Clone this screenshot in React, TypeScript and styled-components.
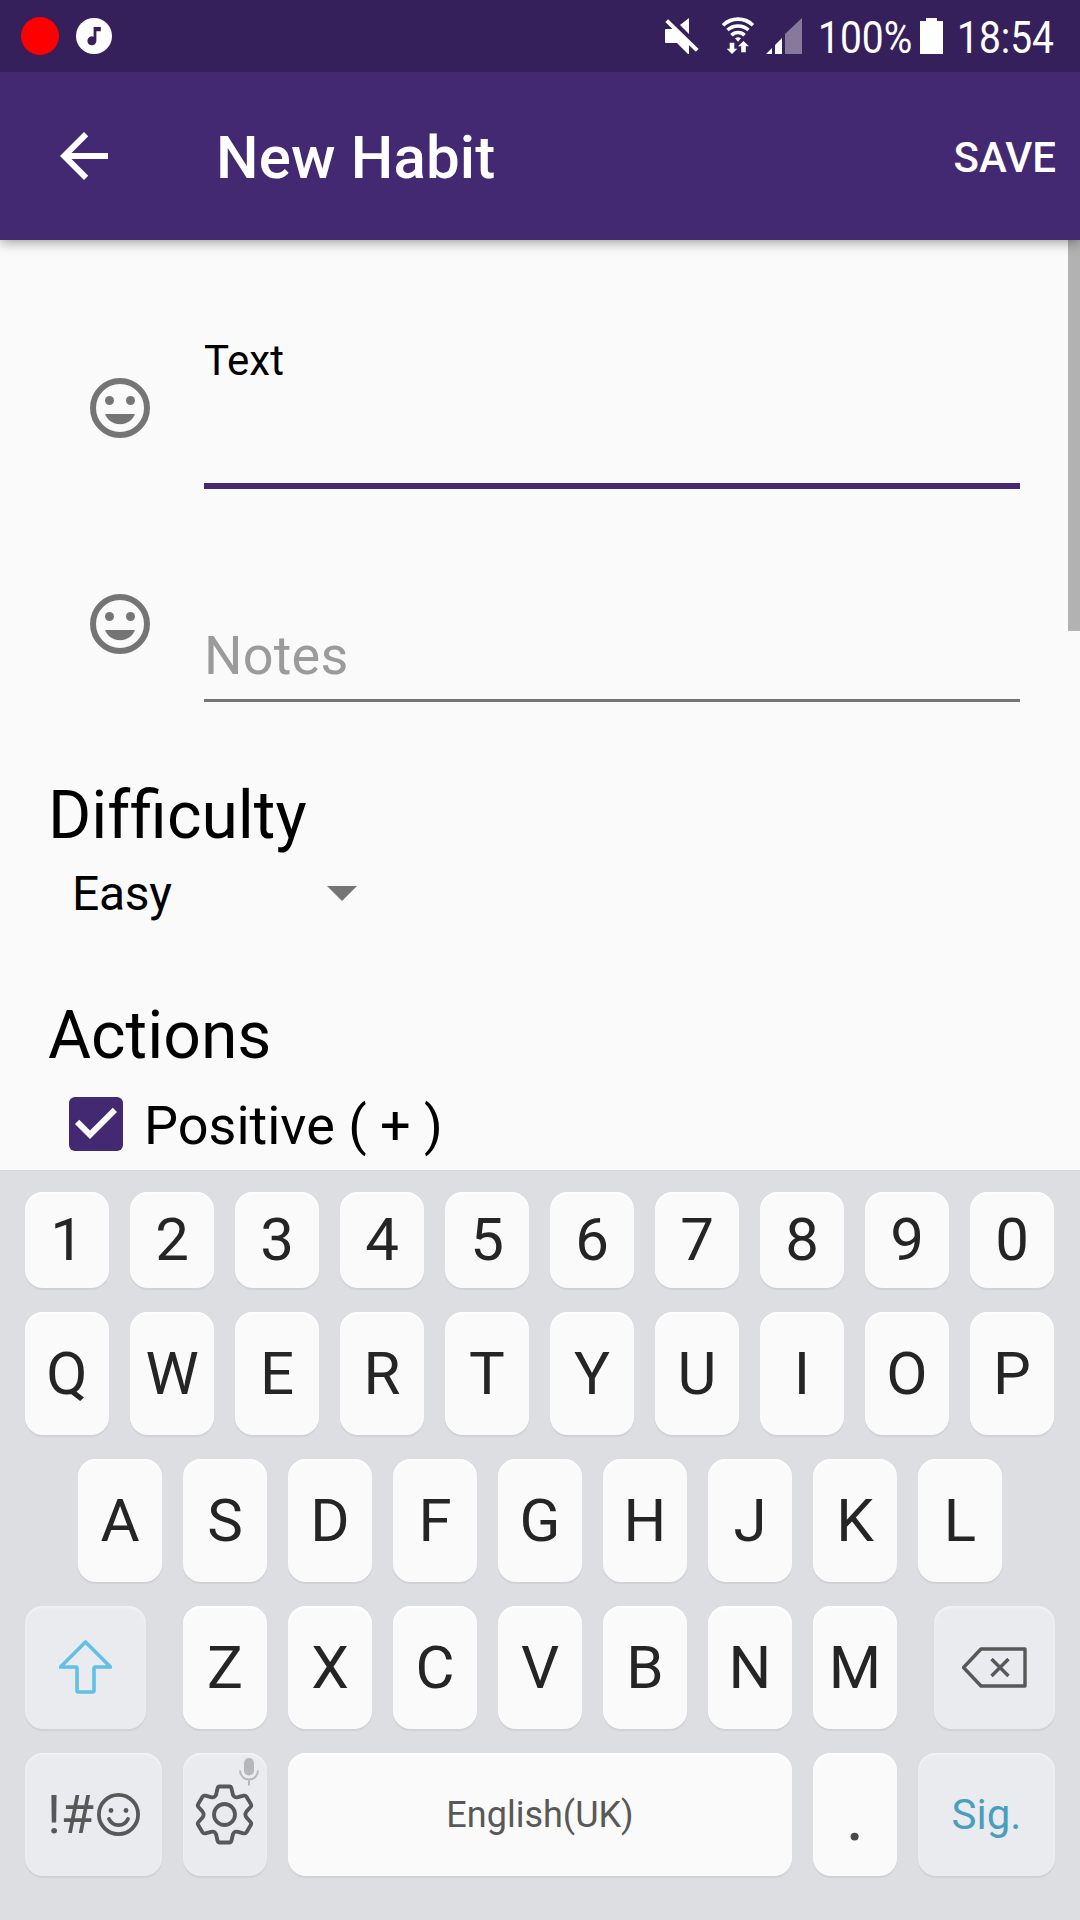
import React from 'react';
import styled, { createGlobalStyle } from 'styled-components';

const GlobalStyle = createGlobalStyle`
  * { box-sizing: border-box; }
  body { margin: 0; background: #fafafa; font-family: Roboto, "Noto Sans", sans-serif; }
  button { border: 0; padding: 0; margin: 0; background: none; font: inherit; color: inherit; }
`;

const Screen = styled.div`
  width: 1080px;
  height: 1920px;
  display: flex;
  flex-direction: column;
  overflow: hidden;
  background: #fafafa;
  color: #000;
`;

const StatusBar = styled.header`
  height: 72px;
  flex: none;
  display: flex;
  align-items: center;
  justify-content: space-between;
  padding: 0 0 0 21px;
  background: #36205b;
  color: #fff;
  z-index: 2;
`;

const StatusGroup = styled.div`
  display: flex;
  align-items: center;
  height: 72px;
`;

const RecordDot = styled.span`
  width: 38px;
  height: 38px;
  border-radius: 50%;
  background: #f00;
  margin-right: 17px;
`;

const Glyph = styled.svg<{ $gap?: number }>`
  display: block;
  flex: none;
  margin-left: ${(p) => p.$gap ?? 0}px;
`;

const StatusText = styled.span<{ $width: number; $gap: number }>`
  width: ${(p) => p.$width}px;
  margin-left: ${(p) => p.$gap}px;
  font-size: 45px;
  line-height: 72px;
  padding-top: 4px;
  white-space: nowrap;
  transform: scaleX(0.865);
  transform-origin: left center;
`;

const AppBar = styled.nav`
  height: 168px;
  flex: none;
  display: flex;
  align-items: center;
  padding: 0 24px 0 48px;
  background: #432872;
  color: #fff;
  z-index: 1;
  box-shadow: 0 2px 12px rgba(0, 0, 0, 0.4);
`;

const IconButton = styled.button`
  display: flex;
`;

const Title = styled.h1`
  margin: 0 0 0 96px;
  padding-top: 4px;
  flex: 1;
  font-size: 60px;
  font-weight: 500;
  line-height: 70px;
  letter-spacing: 0.15px;
`;

const SaveButton = styled.button`
  && {
    font-size: 42px;
    font-weight: 500;
    line-height: 50px;
    padding-top: 4px;
  }
`;

const Content = styled.main`
  height: 930px;
  flex: none;
  display: flex;
  justify-content: space-between;
  overflow: hidden;
`;

const Form = styled.form`
  width: 1020px;
  display: flex;
  flex-direction: column;
`;

const ScrollThumb = styled.div`
  width: 12px;
  height: 391px;
  background: #b2b2b2;
`;

const Field = styled.div<{ $height: number; $iconTop: number }>`
  height: ${(p) => p.$height}px;
  flex: none;
  display: flex;
  align-items: flex-start;
  padding-left: 84px;

  > button { margin-top: ${(p) => p.$iconTop}px; }
`;

const FieldBody = styled.label<{ $line: string; $thick: number; $muted?: boolean }>`
  width: 816px;
  height: 100%;
  margin-left: 48px;
  display: flex;
  flex-direction: column;
  border-bottom: ${(p) => p.$thick}px solid ${(p) => p.$line};
  color: ${(p) => (p.$muted ? '#9b9b9b' : '#000')};
`;

const FloatingLabel = styled.span`
  margin-top: 96px;
  font-size: 42px;
  line-height: 50px;
`;

const Hint = styled.span`
  margin-top: 135px;
  font-size: 54px;
  line-height: 64px;
  letter-spacing: 0.2px;
`;

const SectionTitle = styled.h2<{ $top: number }>`
  margin: ${(p) => p.$top}px 0 0 48px;
  font-size: 66px;
  font-weight: 400;
  line-height: 78px;
`;

const Syllables = styled.span`
  display: inline-block;
`;

const Select = styled.div`
  margin: 2px 0 0 72px;
  width: 285px;
  height: 72px;
  flex: none;
  display: flex;
  align-items: center;
  justify-content: space-between;
  font-size: 48px;
  line-height: 56px;
`;

const SelectValue = styled.span`
  padding-top: 2px;
  letter-spacing: -0.3px;
`;

const CheckRow = styled.label`
  display: flex;
  align-items: center;
  height: 72px;
  flex: none;
  margin: 13px 0 0 60px;
  font-size: 54px;
  line-height: 64px;
`;

const CheckLabel = styled.span`
  margin-left: 12px;
  padding-top: 4px;
`;

const Keyboard = styled.section`
  flex: 1;
  display: flex;
  flex-direction: column;
  gap: 24px;
  padding: 21px 25px 0;
  background: #dddee2;
  border-top: 1px solid #d5d6da;
`;

const KeyRow = styled.div<{ $height: number; $spread?: boolean; $indent?: number }>`
  height: ${(p) => p.$height}px;
  display: flex;
  gap: ${(p) => (p.$spread ? 37 : 21)}px;
  padding-left: ${(p) => p.$indent ?? 0}px;
`;

const KeyGroup = styled.div`
  display: flex;
  gap: 21px;
`;

const Key = styled.button<{ $width?: number; $soft?: boolean }>`
  && {
    width: ${(p) => p.$width ?? 84}px;
    height: 100%;
    flex: none;
    display: flex;
    align-items: center;
    justify-content: center;
    border-radius: 18px;
    background: ${(p) => (p.$soft ? '#e9ebef' : '#fafafa')};
    box-shadow: 0 2px 1px #d0d1d5, inset 0 2px 2px ${(p) => (p.$soft ? '#f2f3f5' : '#fff')};
    color: #252525;
    font-size: 60px;
    line-height: 70px;
    position: relative;
  }
`;

const KeyCaption = styled.span<{ $size: number; $color: string; $drop?: number }>`
  font-size: ${(p) => p.$size}px;
  color: ${(p) => p.$color};
  padding-top: ${(p) => p.$drop ?? 0}px;
`;

const MicBadge = styled.svg`
  position: absolute;
  top: 4px;
  right: 8px;
`;

const Mood = () => (
  <IconButton type="button">
    <Glyph width="72" height="72" viewBox="0 0 24 24" fill="#757575">
      <circle cx="12" cy="12" r="9" fill="none" stroke="#757575" strokeWidth="2" />
      <circle cx="8.5" cy="9.5" r="1.5" />
      <circle cx="15.5" cy="9.5" r="1.5" />
      <path d="M12 17.4c2.3 0 4.22-1.36 5-3.4H7c.78 2.04 2.7 3.4 5 3.4z" />
    </Glyph>
  </IconButton>
);

const letters = (row: string) => row.split('').map((c) => <Key key={c} type="button">{c}</Key>);

export default function App() {
  return (
    <Screen>
      <GlobalStyle />
      <StatusBar>
        <StatusGroup>
          <RecordDot />
          <Glyph width="36" height="36" viewBox="0 0 36 36">
            <circle cx="18" cy="18" r="18" fill="#fff" />
            <path d="M17.6 9h7.2v4.2h-4.400v9.600a4.500 4.500 0 1 1-2.800-4.100z" fill="#36205b" />
          </Glyph>
        </StatusGroup>
        <StatusGroup>
          <Glyph width="34" height="36" viewBox="0 0 34 36" fill="#fff">
            <path d="M1 11h9.500L24 24.500V36h-1L12 25H1q-1 0-1-1V12q0-1 1-1zM15 7L24 0v16z" />
            <path d="M1.700 2.600L32.200 32.400" stroke="#fff" strokeWidth="4" />
          </Glyph>
          <Glyph $gap={23} width="32" height="38" viewBox="0 0 32 38" fill="none" stroke="#fff" strokeWidth="3.600">
            <path d="M1 8.200a21.500 21.500 0 0 1 30 0M5.500 13a15.800 15.800 0 0 1 21 0M9.500 18.200a9.100 9.100 0 0 1 13 0" />
            <path d="M13 21.200q3-2 6 0L16 24.700zM7.700 25.700h4.600v6h3L10 37l-5.300-5.300h3zM19.200 35.300h4.600v-6H27L21.500 24 16 29.300h3.200z" fill="#fff" stroke="none" />
          </Glyph>
          <Glyph $gap={12} width="36" height="36" viewBox="0 0 36 36" fill="#fff">
            <path d="M0 36l6-6v6zM9 27l7-7v16H9z" />
            <path d="M19 16L36 0v36H19z" opacity="0.4" />
          </Glyph>
          <StatusText $gap={16} $width={102}>100%</StatusText>
          <Glyph width="23" height="36" viewBox="0 0 23 36" fill="#fff">
            <path d="M6 0h11v3h6v33H0V3h6z" />
          </Glyph>
          <StatusText $gap={14} $width={123}>18:54</StatusText>
        </StatusGroup>
      </StatusBar>

      <AppBar>
        <IconButton type="button">
          <Glyph width="72" height="72" viewBox="0 0 24 24" fill="#fff">
            <path d="M20 11H7.830l5.590-5.590L12 4l-8 8 8 8 1.410-1.410L7.830 13H20v-2z" />
          </Glyph>
        </IconButton>
        <Title>New Habit</Title>
        <SaveButton type="button">SAVE</SaveButton>
      </AppBar>

      <Content>
        <Form>
          <Field $height={249} $iconTop={132}>
            <Mood />
            <FieldBody $line="#432872" $thick={6}>
              <FloatingLabel>Text</FloatingLabel>
            </FieldBody>
          </Field>
          <Field $height={213} $iconTop={99}>
            <Mood />
            <FieldBody $line="#757575" $thick={3} $muted>
              <Hint>Notes</Hint>
            </FieldBody>
          </Field>
          <SectionTitle $top={75}><Syllables>Dif</Syllables><Syllables>ficulty</Syllables></SectionTitle>
          <Select>
            <SelectValue>Easy</SelectValue>
            <Glyph width="30" height="15" viewBox="0 0 30 15" fill="#757575">
              <path d="M0 0h30L15 15z" />
            </Glyph>
          </Select>
          <SectionTitle $top={68}>Actions</SectionTitle>
          <CheckRow>
            <Glyph width="72" height="72" viewBox="0 0 24 24">
              <rect x="3" y="3" width="18" height="18" rx="2" fill="#432872" />
              <path d="M10 17l-5-5 1.410-1.410L10 14.170l7.590-7.590L19 8l-9 9z" fill="#fafafa" />
            </Glyph>
            <CheckLabel>Positive ( + )</CheckLabel>
          </CheckRow>
        </Form>
        <ScrollThumb />
      </Content>

      <Keyboard>
        <KeyRow $height={96}>{letters('1234567890')}</KeyRow>
        <KeyRow $height={123}>{letters('QWERTYUIOP')}</KeyRow>
        <KeyRow $height={123} $indent={53}>{letters('ASDFGHJKL')}</KeyRow>
        <KeyRow $height={123} $spread>
          <Key $soft $width={121} type="button">
            <Glyph width="53" height="55" viewBox="0.5 0.5 53 55" fill="none" stroke="#62c0e6" strokeWidth="3.600" strokeLinejoin="round">
              <path d="M27 2.500L52 27.500H37q-1.500 0-1.500 1.500V51q0 1.500-1.500 1.500H20q-1.500 0-1.500-1.500V29q0-1.500-1.500-1.500H2z" />
            </Glyph>
          </Key>
          <KeyGroup>{letters('ZXCVBNM')}</KeyGroup>
          <Key $soft $width={121} type="button">
            <Glyph width="65" height="41" viewBox="0.5 0.5 65 41" fill="none" stroke="#585858" strokeWidth="3.400" strokeLinejoin="round">
              <path d="M19.500 2.500H63.500V39.500H19.500L2 21z" />
              <path d="M30 12.500l17 17M47 12.500l-17 17" />
            </Glyph>
          </Key>
        </KeyRow>
        <KeyRow $height={123}>
          <Key $soft $width={137} type="button">
            <KeyCaption $size={54} $color="#585858">!#</KeyCaption>
            <Glyph $gap={3} width="43" height="43" viewBox="0.5 0.5 43 43" fill="none" stroke="#585858" strokeWidth="3.800">
              <circle cx="22" cy="22" r="19.600" />
              <path d="M12.500 26.500a10.500 10.500 0 0 0 19 0" strokeLinecap="round" />
              <circle cx="14.500" cy="18" r="2.400" fill="#585858" stroke="none" />
              <circle cx="29.500" cy="18" r="2.400" fill="#585858" stroke="none" />
            </Glyph>
          </Key>
          <Key $soft type="button">
            <Glyph width="60" height="62" viewBox="-29.5 -30.5 60 62" fill="none" stroke="#585858" strokeWidth="3.800" strokeLinejoin="round">
              <circle r="10.500" />
              <path d="M-5-28H5q1.500 0 2 2L8.500-19.500Q10-16.500 13.500-17.300L19-18.800q2-.5 3 1L26.300-10.500q1 1.600-.3 3L22-3q-2.200 3 0 6L26 7.500q1.300 1.400.3 3L22 17.800q-1 1.500-3 1L13.500 17.300Q10 16.500 8.500 19.500L7 26q-.5 2-2 2H-5q-1.500 0-2-2L-8.500 19.500Q-10 16.500-13.500 17.300L-19 18.800q-2 .5-3-1L-26.300 10.500q-1-1.600.3-3L-22 3q2.200-3 0-6L-26-7.500q-1.300-1.400-.3-3L-22-17.800q1-1.500 3-1L-13.500-17.300Q-10-16.500-8.500-19.500L-7-26q.5-2 2-2z" />
            </Glyph>
            <MicBadge width="20" height="30" viewBox="0 0 20 30" fill="none" stroke="#b6b7b9" strokeWidth="2">
              <rect x="5" y="1" width="10" height="17.500" rx="5" fill="#b6b7b9" stroke="none" />
              <path d="M1 13.500a9 9 0 0 0 18 0M10 22v6.500" />
            </MicBadge>
          </Key>
          <Key $width={504} type="button">
            <KeyCaption $size={36} $color="#585858" $drop={1}>English(UK)</KeyCaption>
          </Key>
          <Key type="button">
            <KeyCaption $size={72} $color="#484848" $drop={2}>.</KeyCaption>
          </Key>
          <Key $soft $width={137} type="button">
            <KeyCaption $size={42} $color="#4a9fbf">Sig.</KeyCaption>
          </Key>
        </KeyRow>
      </Keyboard>
    </Screen>
  );
}
